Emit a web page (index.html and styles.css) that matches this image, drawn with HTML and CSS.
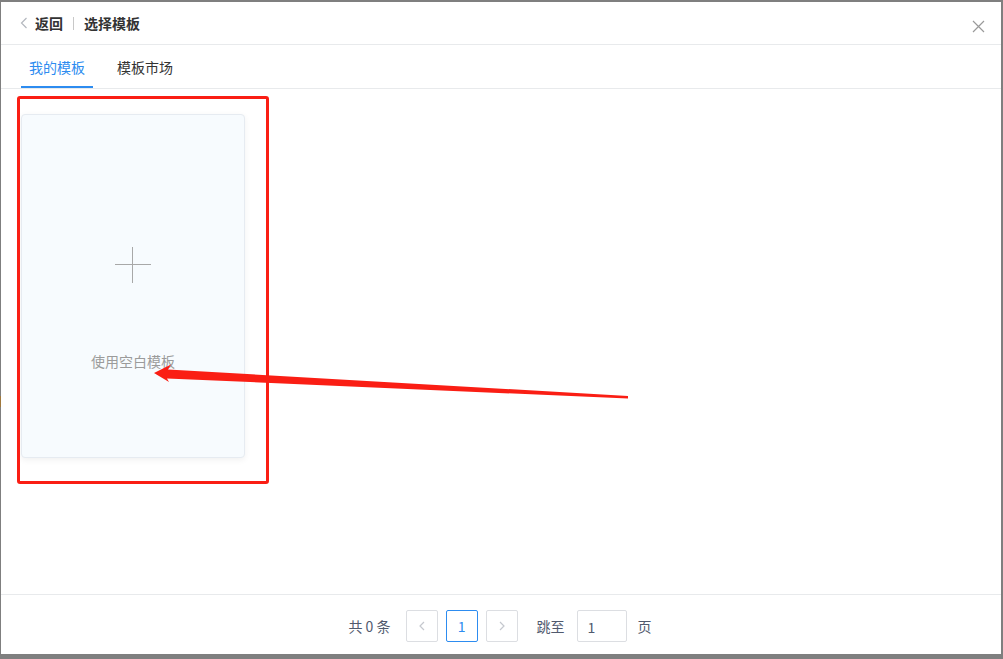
FILE: index.html
```html
<!DOCTYPE html>
<html>
<head>
    <title>选择模板</title>
    <link rel="stylesheet" href="styles.css">
</head>
<body>
<div class="dialog">
    <div class="header">
        <svg class="back-icon" width="8" height="12" viewBox="0 0 8 12"><path d="M6.5 1 L1.5 6 L6.5 11" fill="none" stroke="#b4b8bf" stroke-width="1.2"/></svg>
        <span class="back">返回</span>
        <span class="divider"></span>
        <span class="title">选择模板</span>
        <svg class="close" width="13" height="13" viewBox="0 0 13 13"><path d="M1 1 L12 12 M12 1 L1 12" stroke="#9a9a9a" stroke-width="1.2"/></svg>
    </div>
    <div class="tabs">
        <div class="tab active">我的模板</div>
        <div class="tab">模板市场</div>
    </div>
    <div class="content">
        <div class="card">
            <div class="plus"></div>
            <div class="card-text">使用空白模板</div>
        </div>
        <div class="mark-box"></div>
    </div>
    <div class="footer">
        <span class="total">共 0 条</span>
        <span class="page-btn">
            <svg width="6" height="10" viewBox="0 0 6 10"><path d="M5 1 L1 5 L5 9" fill="none" stroke="#c5c8ce" stroke-width="1.2"/></svg>
        </span>
        <span class="page-btn current">1</span>
        <span class="page-btn next">
            <svg width="6" height="10" viewBox="0 0 6 10"><path d="M1 1 L5 5 L1 9" fill="none" stroke="#c5c8ce" stroke-width="1.2"/></svg>
        </span>
        <span class="jump">跳至</span>
        <span class="jump-input">1</span>
        <span class="unit">页</span>
    </div>
</div>
<svg class="arrow" width="1003" height="659" viewBox="0 0 1003 659">
    <polygon points="154,373 171,364.5 168,369.5 628,396 628,398.5 167,378.5 169,382" fill="#fa1e14"/>
</svg>
<div class="edge-mark"></div>
</body>
</html>
```

FILE: styles.css
```css
body {
    margin: 0;
    padding: 0;
    background-color: #7f7f7f;
    font-family: "Noto Sans CJK SC", "Liberation Sans", sans-serif;
    font-size: 14px;
    color: #333;
}

.dialog {
    margin: 2px 2px 5px 1px;
    width: 1000px;
    height: 652px;
    background-color: #fff;
    display: flex;
    flex-direction: column;
    box-sizing: border-box;
}

/* Шапка */
.header {
    height: 43px;
    border-bottom: 1px solid #e8eaec;
    box-sizing: border-box;
    display: flex;
    align-items: center;
    padding: 0 16px 0 19px;
}

.back-icon {
    margin-right: 7px;
}

.back,
.title {
    font-weight: bold;
    color: #333;
    line-height: 20px;
}

.divider {
    width: 1px;
    height: 13px;
    background-color: #c8c8c8;
    margin: 0 10px;
}

.close {
    margin-left: auto;
    margin-top: 6px;
}

/* Вкладки */
.tabs {
    height: 44px;
    border-bottom: 1px solid #e8eaec;
    box-sizing: border-box;
    display: flex;
    gap: 16px;
    padding-left: 20px;
}

.tab {
    padding: 3px 8px 0;
    display: flex;
    align-items: center;
    border-bottom: 2px solid transparent;
    box-sizing: border-box;
    color: #333;
}

.tab.active {
    color: #2d8cf0;
    border-bottom-color: #2d8cf0;
}

/* Контент */
.content {
    flex: 1;
    padding: 25px 20px;
    position: relative;
}

.card {
    width: 224px;
    height: 344px;
    box-sizing: border-box;
    background-color: #f7fbfe;
    border: 1px solid #e6ebf1;
    border-radius: 4px;
    box-shadow: 0 2px 6px rgba(0, 0, 0, 0.06);
    display: flex;
    flex-direction: column;
    align-items: center;
}

.plus {
    width: 36px;
    height: 36px;
    margin-top: 132px;
    position: relative;
}

.plus::before,
.plus::after {
    content: "";
    position: absolute;
    background-color: #a8a8a8;
}

.plus::before {
    left: 0;
    top: 17px;
    width: 36px;
    height: 1px;
}

.plus::after {
    left: 17px;
    top: 0;
    width: 1px;
    height: 36px;
}

.card-text {
    margin-top: 68px;
    line-height: 20px;
    color: #9b9b9b;
}

.mark-box {
    position: absolute;
    left: 16px;
    top: 7px;
    width: 252px;
    height: 388px;
    box-sizing: border-box;
    border: 3px solid #fa1e14;
    border-radius: 3px;
}

/* Пагінація */
.footer {
    height: 60px;
    border-top: 1px solid #e8eaec;
    box-sizing: border-box;
    display: flex;
    justify-content: center;
    align-items: flex-start;
    padding-top: 15px;
    padding-right: 2px;
    color: #515a6e;
}

.footer > span {
    height: 32px;
    line-height: 32px;
}

.total {
    margin-right: 15px;
}

.page-btn {
    width: 32px;
    box-sizing: border-box;
    border: 1px solid #dcdee2;
    border-radius: 2px;
    margin-right: 8px;
    display: flex;
    align-items: center;
    justify-content: center;
}

.page-btn.current {
    border-color: #2d8cf0;
    color: #2d8cf0;
}

.page-btn.next {
    margin-right: 19px;
}

.jump {
    margin-right: 12px;
}

.jump-input {
    width: 50px;
    box-sizing: border-box;
    border: 1px solid #dcdee2;
    border-radius: 2px;
    padding-left: 10px;
    margin-right: 11px;
    color: #515a6e;
}

.arrow {
    position: absolute;
    left: 0;
    top: 0;
    pointer-events: none;
}

.edge-mark {
    position: absolute;
    left: 0;
    top: 396px;
    width: 1px;
    height: 11px;
    background-color: #a0783c;
}
```
